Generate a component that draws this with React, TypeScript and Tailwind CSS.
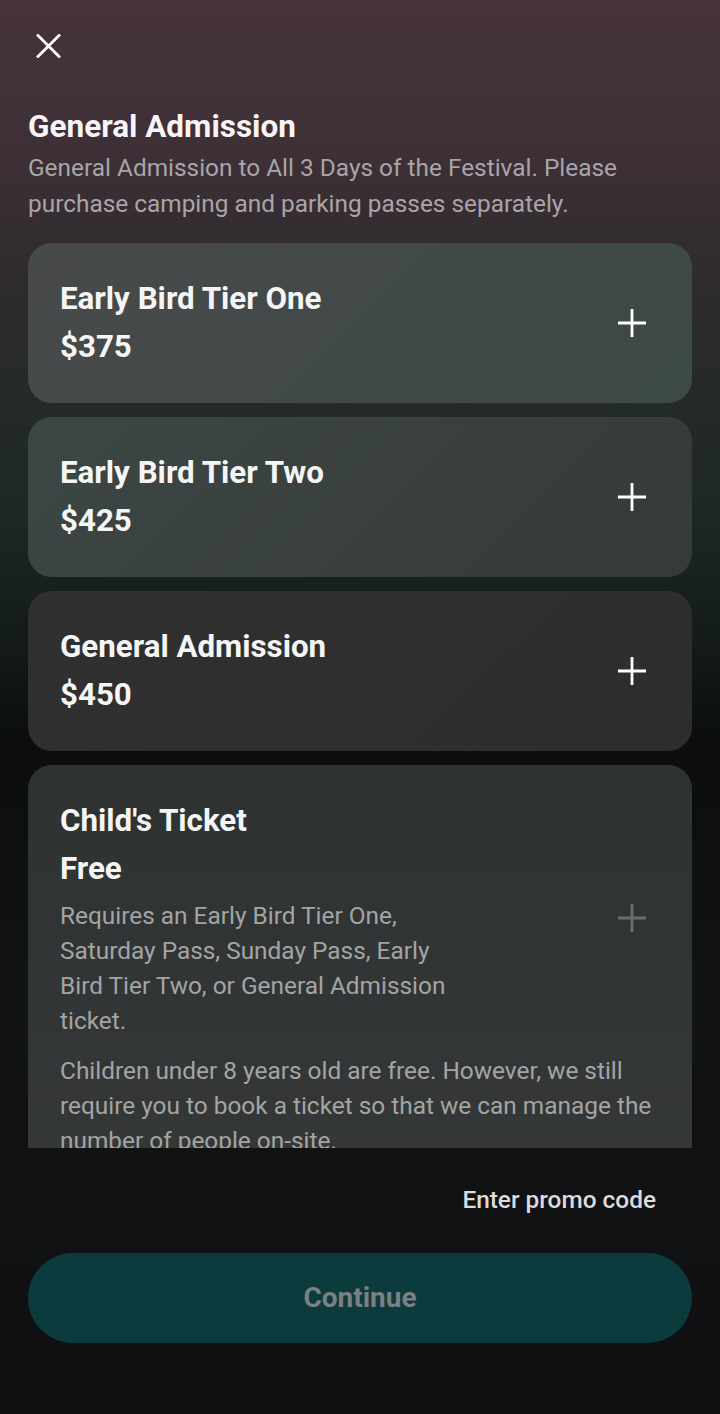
const tickets = [
  { name: 'Early Bird Tier One', price: '$375', bg: 'bg-[linear-gradient(135deg,#484a4a_0%,#414948_55%,#3d4a47_100%)]' },
  { name: 'Early Bird Tier Two', price: '$425', bg: 'bg-[linear-gradient(135deg,#3c4745_0%,#393f3d_60%,#363a38_100%)]' },
  { name: 'General Admission', price: '$450', bg: 'bg-[linear-gradient(135deg,#303030_0%,#2d2d2d_100%)]' },
];

function PlusIcon({ disabled }: { disabled?: boolean }) {
  return (
    <button className={`shrink-0 ${disabled ? 'text-[#6b6f6e]' : 'text-white'}`} aria-label="Add ticket">
      <svg width="28" height="28" viewBox="0 0 28 28" fill="none" stroke="currentColor" strokeWidth="2.8">
        <path d="M0 14h28M14 0v28" />
      </svg>
    </button>
  );
}

export default function App() {
  return (
    <div
      className="h-[1414px] w-full flex flex-col overflow-hidden bg-[linear-gradient(180deg,#46333b_0%,#3f3037_10%,#2e2b2e_20%,#1d2826_36%,#131a18_46%,#0c0e0e_52%,#111413_72%,#100f12_100%)]"
      style={{ fontFamily: 'Roboto, "Noto Sans", sans-serif' }}
    >
      {/* Close */}
      <div className="h-[90px] shrink-0 pt-[34px] pl-[36px]">
        <button className="block text-white" aria-label="Close">
          <svg width="25" height="24" viewBox="0 0 25 24" fill="none" stroke="currentColor" strokeWidth="2.8">
            <path d="M1 0.5l23 23M24 0.5l-23 23" />
          </svg>
        </button>
      </div>

      {/* Scroll area */}
      <div className="flex-1 min-h-0 overflow-hidden px-7 pt-[19px]">
        <h1 className="text-[31.5px] leading-[36px] font-bold text-[#f7f5f6]">General Admission</h1>
        <p className="mt-[5px] text-[24.4px] leading-[36px] text-[#a9a5a8]">
          General Admission to All 3 Days of the Festival. Please purchase camping and parking passes separately.
        </p>

        <div className="mt-[21px] flex flex-col gap-[14px]">
          {tickets.map((t) => (
            <div key={t.name} className={`${t.bg} rounded-[24px] pl-8 pr-[46px] py-8 flex items-center`}>
              <div className="flex-1">
                <div className="text-[31.3px] leading-[48px] font-bold text-[#f5f5f5]">{t.name}</div>
                <div className="text-[31.3px] leading-[48px] font-bold text-[#f5f5f5]">{t.price}</div>
              </div>
              <PlusIcon />
            </div>
          ))}

          <div className="rounded-t-[24px] bg-[linear-gradient(180deg,#2e3231_0%,#323535_50%,#363838_100%)] pl-8 pr-8 pt-8 pb-8">
            <div className="flex items-center pr-[14px]">
              <div className="flex-1">
                <div className="text-[31.3px] leading-[48px] font-bold text-[#f5f5f5]">Child's Ticket</div>
                <div className="text-[31.3px] leading-[48px] font-bold text-[#f5f5f5]">Free</div>
                <p className="mt-[5px] max-w-[400px] text-[24.4px] leading-[35px] text-[#a3a5a4]">
                  Requires an Early Bird Tier One, Saturday Pass, Sunday Pass, Early Bird Tier Two, or General Admission ticket.
                </p>
              </div>
              <PlusIcon disabled />
            </div>
            <p className="mt-[15px] text-[24.4px] leading-[35px] text-[#a3a5a4]">
              Children under 8 years old are free. However, we still require you to book a ticket so that we can manage the number of people on-site.
            </p>
          </div>
        </div>
      </div>

      {/* Footer */}
      <div className="h-[266px] shrink-0 px-7 pt-[34px]">
        <div className="flex justify-end pr-9">
          <button className="text-[24.4px] leading-[36px] font-medium text-[#dedadd]">Enter promo code</button>
        </div>
        <button
          disabled
          className="mt-[35px] w-full h-[90px] rounded-full bg-[#0b3b3c] text-[28px] font-bold text-[#7b8084]"
        >
          Continue
        </button>
      </div>
    </div>
  );
}
